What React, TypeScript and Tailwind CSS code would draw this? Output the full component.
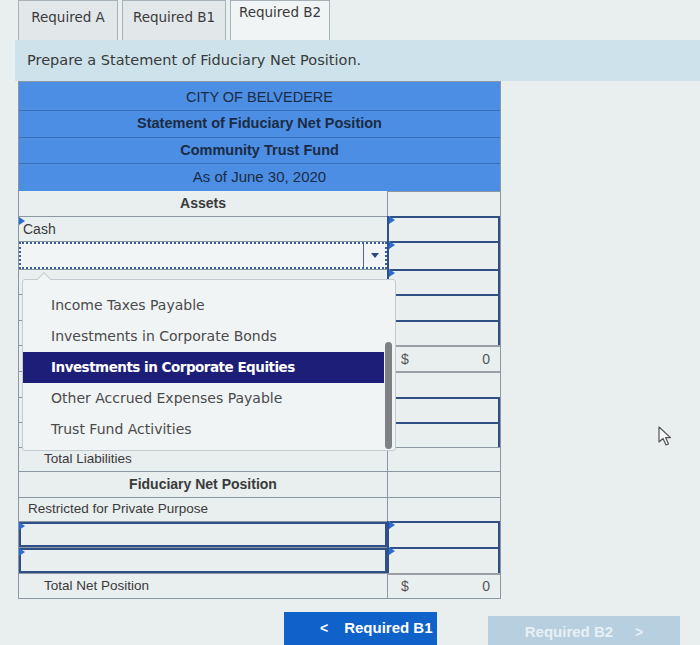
import React from "react";

const sans = { fontFamily: '"DejaVu Sans", Verdana, sans-serif' };
const arial = { fontFamily: '"Liberation Sans", Arial, sans-serif' };

function Marker() {
  return (
    <span className="absolute left-0 top-0 w-0 h-0 border-t-[4px] border-b-[4px] border-l-[6px] border-t-transparent border-b-transparent border-l-[#2a6bd1]" />
  );
}

type Right = "input" | "total" | "read" | "plain";

function RightCell({ kind, h }: { kind: Right; h: number }) {
  if (kind === "input") {
    return (
      <div className="relative border-l-2 border-[#2f4f86]" style={{ height: h }}>
        <div className="h-full border-t-2 border-r-2 border-[#2f4f86] ml-[1px]" />
        <Marker />
      </div>
    );
  }
  if (kind === "total" || kind === "read") {
    return (
      <div className="border-l border-[#8b98a3]" style={{ height: h }}>
        <div className="h-full border-t-2 border-[#9aa0a6] flex items-center justify-between pl-[13px] pr-[10px] text-[14px] text-[#555]" style={arial}>
          {kind === "total" ? (
            <>
              <span>$</span>
              <span>0</span>
            </>
          ) : null}
        </div>
      </div>
    );
  }
  return <div className="border-l border-t border-[#8b98a3]" style={{ height: h }} />;
}

type Row = {
  h: number;
  left: React.ReactNode;
  right: Right;
  leftClass?: string;
};

const rows: Row[] = [
  { h: 25, left: <span className="font-bold text-[14px] w-full text-center">Assets</span>, right: "plain" },
  { h: 25, left: (<><Marker /><span className="pl-[4px] text-[14px]">Cash</span></>), right: "input" },
  {
    h: 28,
    left: (
      <div className="h-full w-full flex border-2 border-dotted border-[#3a5f9a] bg-[#f2f5f6]">
        <div className="flex-1" />
        <div className="w-[22px] border-l border-[#5a6a7a] flex items-center justify-center">
          <span className="w-0 h-0 border-l-[4px] border-r-[4px] border-t-[5px] border-l-transparent border-r-transparent border-t-[#2d4a7a]" />
        </div>
      </div>
    ),
    right: "input",
  },
  { h: 25, left: null, right: "input" },
  { h: 26, left: null, right: "input" },
  { h: 25, left: null, right: "input" },
  { h: 26, left: null, right: "total" },
  { h: 26, left: null, right: "read" },
  { h: 25, left: null, right: "input" },
  { h: 25, left: null, right: "input" },
  { h: 24, left: <span className="pl-[25px] text-[13.5px]">Total Liabilities</span>, right: "plain" },
  { h: 26, left: <span className="font-bold text-[14px] w-full text-center">Fiduciary Net Position</span>, right: "plain" },
  { h: 24, left: <span className="pl-[9px] text-[13.5px]">Restricted for Private Purpose</span>, right: "plain" },
  {
    h: 26,
    left: (<><div className="h-full w-full border-2 border-[#2f4f86]" /><Marker /></>),
    right: "input",
  },
  {
    h: 26,
    left: (<><div className="h-full w-full border-2 border-[#2f4f86]" /><Marker /></>),
    right: "input",
  },
  { h: 25, left: <span className="pl-[25px] text-[13.5px]">Total Net Position</span>, right: "total" },
];

const options = [
  "Income Taxes Payable",
  "Investments in Corporate Bonds",
  "Investments in Corporate Equities",
  "Other Accrued Expenses Payable",
  "Trust Fund Activities",
];

export default function App() {
  return (
    <div className="relative w-[700px] h-[645px] overflow-hidden bg-[#e9eeef] text-[#333]" style={sans}>
      {/* tabs */}
      <div className="flex items-end h-[40px] pl-[18px] gap-[4px]">
        <div className="w-[100px] h-[40px] border border-b-0 border-[#a7b2b8] bg-[#e2e8ea] flex items-start justify-center pt-[6px] text-[13.5px] text-[#3a3a3a]">
          Required A
        </div>
        <div className="w-[104px] h-[40px] border border-b-0 border-[#a7b2b8] bg-[#e2e8ea] flex items-start justify-center pt-[6px] text-[13.5px] text-[#3a3a3a]">
          Required B1
        </div>
        <div className="w-[100px] h-[40px] border border-b-0 border-[#a7b2b8] bg-[#f1f4f5] flex items-start justify-center pt-[1px] text-[13.5px] text-[#3a3a3a]">
          Required B2
        </div>
      </div>

      {/* instructions */}
      <div className="ml-[15px] h-[41px] bg-[#cde2ea] flex items-center pl-[12px] text-[14.5px] text-[#3a3a3a]">
        Prepare a Statement of Fiduciary Net Position.
      </div>

      {/* statement */}
      <div className="ml-[18px] w-[483px] border border-[#8b98a3] text-[#3a3a3a]" style={arial}>
        <div className="bg-[#4b8ee3] text-[#1c2b44]">
          <div className="h-[29px] flex items-center justify-center text-[14.5px] border-b border-[#3c6fb5] pt-[3px]">CITY OF BELVEDERE</div>
          <div className="h-[27px] flex items-center justify-center text-[14.5px] font-bold border-b border-[#3c6fb5]">Statement of Fiduciary Net Position</div>
          <div className="h-[26px] flex items-center justify-center text-[14.5px] font-bold border-b border-[#3c6fb5]">Community Trust Fund</div>
          <div className="h-[27px] flex items-center justify-center text-[15px]">As of June 30, 2020</div>
        </div>
        <div className="grid grid-cols-[368px_113px]">
          {rows.map((r, i) => (
            <React.Fragment key={i}>
              <div
                className={`relative flex items-center ${i === 0 ? "" : "border-t border-[#8b98a3]"}`}
                style={{ height: r.h }}
              >
                {r.left}
              </div>
              <RightCell kind={r.right} h={r.h} />
            </React.Fragment>
          ))}
        </div>
      </div>

      {/* navigation */}
      <div className="flex items-start mt-[13px] pl-[284px] gap-[51px]" style={arial}>
        <div className="w-[153px] h-[33px] bg-[#0e62c9] flex items-center pl-[36px] gap-[16px] text-white text-[15px] font-bold">
          <span className="text-[14px]">&lt;</span>
          <span>Required B1</span>
        </div>
        <div className="mt-[4px] w-[192px] h-[33px] bg-[#b7cfdf] flex items-center justify-center gap-[22px] text-[#e8f0f5] text-[15px] font-bold">
          <span>Required B2</span>
          <span className="text-[14px]">&gt;</span>
        </div>
      </div>

      {/* open dropdown list */}
      <div className="absolute left-[22px] top-[279px] w-[374px] h-[172px] bg-[#f1f4f5] border border-[#c3cbd0] rounded-[3px]">
        <span className="absolute left-[16px] -top-[6px] w-[10px] h-[10px] rotate-45 bg-[#f1f4f5] border-l border-t border-[#c3cbd0]" />
        <div className="relative w-[361px] pt-[10px]">
          {options.map((o, i) => (
            <div
              key={o}
              className={`h-[31px] flex items-center pl-[28px] ${
                i === 2
                  ? "bg-[#1c1e78] text-white font-bold text-[13.5px] tracking-[-0.5px]"
                  : "text-[#4a4a4a] text-[14px]"
              }`}
            >
              {o}
            </div>
          ))}
        </div>
        <div className="absolute left-[362px] top-[62px] w-[7px] h-[107px] rounded-full bg-[#7d8184]" />
      </div>

      {/* mouse pointer */}
      <svg className="absolute left-[657px] top-[426px]" width="18" height="22" viewBox="0 0 18 22">
        <path d="M2 1 L2 16 L6 12.5 L9 19 L11.5 18 L8.6 11.6 L13.5 11.6 Z" fill="#f4f6f7" stroke="#555" strokeWidth="1.2" strokeLinejoin="round" />
      </svg>
    </div>
  );
}
